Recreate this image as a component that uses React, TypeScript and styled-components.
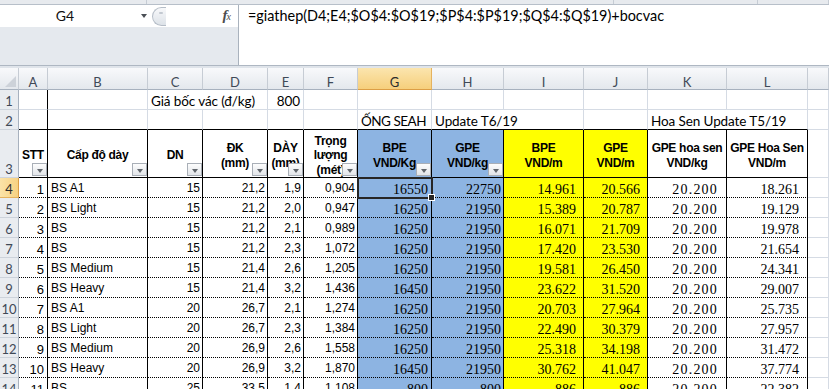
import React from 'react';
import styled, { createGlobalStyle } from 'styled-components';

const GlobalStyle = createGlobalStyle`
  html, body {
    margin: 0;
    padding: 0;
    background: #fff;
    overflow: hidden;
  }
  body {
    font-family: "Liberation Sans", Arial, sans-serif;
  }
`;

const GRID = '#d5dbe4';
const INK = '#000';
const BLUE = '#8db4e2';
const YELLOW = '#ffff00';
const UI_FONT = 'Lato, "Noto Sans", sans-serif';

// row header + columns A..L + a slice of M
const COLS = '19px 29px 100px 55px 65px 36px 54px 74px 72px 80px 64px 79px 81px 21px';

type Line = 'grid' | 'solid' | 'dotted';
type Align = 'left' | 'right' | 'center';

const line = (l: Line = 'grid') =>
  l === 'solid' ? `1px solid ${INK}` : l === 'dotted' ? `1px dotted ${INK}` : `1px solid ${GRID}`;

const Window = styled.div`
  width: 829px;
  height: 389px;
  overflow: hidden;
  background: #fff;
`;

const Ribbon = styled.div`
  display: flex;
  height: 5px;
  box-sizing: border-box;
  background: #e7eaee;
  border-bottom: 1px solid #b7bfc9;
`;

const RibbonGroup = styled.div<{ $w?: number }>`
  width: ${p => (p.$w ? `${p.$w}px` : 'auto')};
  flex: ${p => (p.$w ? 'none' : 1)};
  border-right: 1px solid #c6ccd4;
`;

const FormulaBar = styled.div`
  display: flex;
  height: 61px;
  box-sizing: border-box;
  border-bottom: 1px solid #aeb7c2;
`;

const LeftPane = styled.div`
  width: 239px;
  box-sizing: border-box;
  display: flex;
  flex-direction: column;
  background: #e5e9ee;
  border-right: 1px solid #a9b2bd;
`;

const NameRow = styled.div`
  height: 22px;
  display: flex;
  align-items: center;
  background: #fff;
`;

const NameBox = styled.div`
  width: 152px;
  height: 100%;
  display: flex;
  align-items: center;
`;

const NameText = styled.span`
  width: 130px;
  text-align: center;
  font: 14px/20px ${UI_FONT};
  color: #111;
`;

const Caret = styled.span`
  width: 0;
  height: 0;
  margin: 0 5px 0 auto;
  border-left: 3.5px solid transparent;
  border-right: 3.5px solid transparent;
  border-top: 4px solid #4a4f55;
`;

const Splitter = styled.div`
  position: relative;
  width: 14px;
  height: 19px;
  box-sizing: border-box;
  border: 1px solid #b5bdc7;
  border-right: none;
  border-radius: 10px 0 0 10px;
  background: linear-gradient(#f7f8fa, #dde2e8);
  &::after {
    content: '';
    position: absolute;
    left: 6px;
    top: 4px;
    width: 4px;
    height: 2px;
    border-radius: 1px;
    background: #c3c9d1;
  }
`;

const FxZone = styled.div`
  flex: 1;
  height: 100%;
  display: flex;
  align-items: center;
  justify-content: flex-end;
  padding-right: 7px;
`;

const Fx = styled.span`
  font: italic bold 15px/20px "Liberation Serif", "Times New Roman", serif;
  color: #4d4d4d;
`;

const FxSub = styled.span`
  font-size: 10px;
  font-weight: normal;
  margin-left: -1px;
`;

const FormulaText = styled.div`
  flex: 1;
  background: #fff;
  padding: 1px 0 0 9px;
  font: 14.4px/20px ${UI_FONT};
  color: #000;
  white-space: nowrap;
`;

const Gap = styled.div`
  height: 2px;
  background: #dfe4ea;
`;

const Sheet = styled.div`
  display: grid;
  grid-template-columns: ${COLS};
  grid-template-rows: 22px 20px 20px 48px repeat(11, 20px);
`;

const ColHead = styled.div<{ $active?: boolean }>`
  box-sizing: border-box;
  position: relative;
  display: flex;
  align-items: flex-end;
  justify-content: center;
  font: 13px/14px ${UI_FONT};
  color: ${p => (p.$active ? '#2c2c2c' : '#3f4957')};
  background: ${p =>
    p.$active ? 'linear-gradient(#fbe5ae, #f6cf7c)' : 'linear-gradient(#f8f9fb, #e4e8ed)'};
  border-right: 1px solid ${p => (p.$active ? '#e5b25e' : '#c6ccd4')};
  border-bottom: 1px solid ${p => (p.$active ? '#dc9e45' : '#a7b1be')};
`;

const Corner = styled(ColHead)`
  &::after {
    content: '';
    position: absolute;
    right: 2px;
    bottom: 2px;
    border-left: 11px solid transparent;
    border-bottom: 11px solid #cdd2d9;
  }
`;

const RowHead = styled.div<{ $active?: boolean }>`
  box-sizing: border-box;
  display: flex;
  align-items: flex-end;
  justify-content: center;
  padding-bottom: 1px;
  font: 13px/14px ${UI_FONT};
  color: ${p => (p.$active ? '#2c2c2c' : '#3f4957')};
  background: ${p => (p.$active ? 'linear-gradient(90deg, #fbe3a8, #f7d282)' : '#e9ecf0')};
  border-right: 1px solid ${p => (p.$active ? '#dc9e45' : '#a7b1be')};
  border-bottom: 1px solid ${p => (p.$active ? '#e5b25e' : '#cdd3db')};
`;

const Cell = styled.div<{ $r?: Line; $b?: Line; $fill?: string; $align?: Align; $span?: number }>`
  box-sizing: border-box;
  position: relative;
  display: flex;
  align-items: flex-end;
  justify-content: ${p =>
    p.$align === 'right' ? 'flex-end' : p.$align === 'center' ? 'center' : 'flex-start'};
  min-width: 0;
  overflow: hidden;
  white-space: nowrap;
  background: ${p => p.$fill || '#fff'};
  border-right: ${p => line(p.$r)};
  border-bottom: ${p => line(p.$b)};
  grid-column: ${p => (p.$span ? `span ${p.$span}` : 'auto')};
`;

const ActiveCell = styled(Cell)`
  overflow: visible;
  z-index: 2;
`;

const Selection = styled.span`
  position: absolute;
  top: -1px;
  left: -1px;
  right: -2px;
  bottom: -2px;
  border: 2px solid #262626;
  pointer-events: none;
  &::after {
    content: '';
    position: absolute;
    right: -4px;
    bottom: -4px;
    width: 5px;
    height: 5px;
    background: #262626;
    border: 1px solid #fff;
  }
`;

const HeadCell = styled(Cell)`
  align-items: center;
  justify-content: center;
  padding-top: 4px;
  white-space: normal;
`;

const HeadText = styled.div`
  font: bold 12px/14.5px "Liberation Sans", Arial, sans-serif;
  letter-spacing: -0.3px;
  text-align: center;
  color: #000;
`;

const FilterBtn = styled.span`
  position: absolute;
  right: 0;
  bottom: 1px;
  width: 15px;
  height: 13px;
  box-sizing: border-box;
  display: flex;
  align-items: center;
  justify-content: center;
  border: 1px solid #a9afb7;
  background: linear-gradient(#fdfdfd, #e2e5e9);
  &::after {
    content: '';
    margin-top: 2px;
    border-left: 3.5px solid transparent;
    border-right: 3.5px solid transparent;
    border-top: 4px solid #62676d;
  }
`;

const Label = styled.span<{ $tight?: boolean }>`
  padding: 0 3px;
  font: 13.5px/15px ${UI_FONT};
  letter-spacing: ${p => (p.$tight ? '-0.5px' : '-0.1px')};
  color: #000;
`;

const Idx = styled.span`
  padding-right: 3px;
  font: 13px/14px "Liberation Sans", Arial, sans-serif;
  color: #000;
`;

const Txt = styled.span<{ $right?: boolean }>`
  padding: 0 ${p => (p.$right ? 2 : 0)}px 2px ${p => (p.$right ? 0 : 3)}px;
  font: 12px/14px "Liberation Sans", Arial, sans-serif;
  color: #000;
`;

const Num = styled.span<{ $pr: number; $wide?: boolean }>`
  padding-right: ${p => p.$pr}px;
  font: 14px/14px "Liberation Serif", "Times New Roman", serif;
  letter-spacing: ${p => (p.$wide ? '1.2px' : '0')};
  color: #000;
`;

type Item = [number, string, number, string, string, string, number, number, string, string, string, string];

const ITEMS: Item[] = [
  [1, 'BS A1', 15, '21,2', '1,9', '0,904', 16550, 22750, '14.961', '20.566', '20.200', '18.261'],
  [2, 'BS Light', 15, '21,2', '2,0', '0,947', 16250, 21950, '15.389', '20.787', '20.200', '19.129'],
  [3, 'BS', 15, '21,2', '2,1', '0,989', 16250, 21950, '16.071', '21.709', '20.200', '19.978'],
  [4, 'BS', 15, '21,2', '2,3', '1,072', 16250, 21950, '17.420', '23.530', '20.200', '21.654'],
  [5, 'BS Medium', 15, '21,4', '2,6', '1,205', 16250, 21950, '19.581', '26.450', '20.200', '24.341'],
  [6, 'BS Heavy', 15, '21,4', '3,2', '1,436', 16450, 21950, '23.622', '31.520', '20.200', '29.007'],
  [7, 'BS A1', 20, '26,7', '2,1', '1,274', 16250, 21950, '20.703', '27.964', '20.200', '25.735'],
  [8, 'BS Light', 20, '26,7', '2,3', '1,384', 16250, 21950, '22.490', '30.379', '20.200', '27.957'],
  [9, 'BS Medium', 20, '26,9', '2,6', '1,558', 16250, 21950, '25.318', '34.198', '20.200', '31.472'],
  [10, 'BS Heavy', 20, '26,9', '3,2', '1,870', 16450, 21950, '30.762', '41.047', '20.200', '37.774'],
  [11, 'BS', 25, '33,5', '1,4', '1,108', 800, 800, '886', '886', '20.200', '22.382'],
];

const HEADINGS: { lines: string[]; fill?: string; filter?: boolean }[] = [
  { lines: ['STT'], filter: true },
  { lines: ['Cấp độ dày'], filter: true },
  { lines: ['DN'], filter: true },
  { lines: ['ĐK', '(mm)'], filter: true },
  { lines: ['DÀY', '(mm)'], filter: true },
  { lines: ['Trọng', 'lượng', '(mét)'], filter: true },
  { lines: ['BPE', 'VND/Kg'], fill: BLUE, filter: true },
  { lines: ['GPE', 'VND/kg'], fill: BLUE, filter: true },
  { lines: ['BPE', 'VND/m'], fill: YELLOW },
  { lines: ['GPE', 'VND/m'], fill: YELLOW },
  { lines: ['GPE hoa sen', 'VND/kg'] },
  { lines: ['GPE Hoa Sen', 'VND/m'] },
];

const LETTERS = ['A', 'B', 'C', 'D', 'E', 'F', 'G', 'H', 'I', 'J', 'K', 'L', ''];

const App: React.FC = () => {
  return (
    <Window>
      <GlobalStyle />
      <Ribbon>
        <RibbonGroup $w={146} />
        <RibbonGroup $w={466} />
        <RibbonGroup $w={143} />
        <RibbonGroup />
      </Ribbon>

      <FormulaBar>
        <LeftPane>
          <NameRow>
            <NameBox>
              <NameText>G4</NameText>
              <Caret />
            </NameBox>
            <Splitter />
            <FxZone>
              <Fx>
                f<FxSub>x</FxSub>
              </Fx>
            </FxZone>
          </NameRow>
        </LeftPane>
        <FormulaText>=giathep(D4;E4;$O$4:$O$19;$P$4:$P$19;$Q$4:$Q$19)+bocvac</FormulaText>
      </FormulaBar>
      <Gap />

      <Sheet>
        {/* column letters */}
        <Corner />
        {LETTERS.map((l, i) => (
          <ColHead key={`c${i}`} $active={l === 'G'}>
            {l}
          </ColHead>
        ))}

        {/* row 1 */}
        <RowHead>1</RowHead>
        <Cell $r="solid" />
        <Cell />
        <Cell $span={2}>
          <Label>Giá bốc vác (đ/kg)</Label>
        </Cell>
        <Cell $align="right">
          <Label>800</Label>
        </Cell>
        <Cell />
        <Cell />
        <Cell />
        <Cell />
        <Cell />
        <Cell />
        <Cell />
        <Cell />

        {/* row 2 */}
        <RowHead>2</RowHead>
        <Cell $r="solid" $b="solid" />
        <Cell $b="solid" />
        <Cell $b="solid" />
        <Cell $b="solid" />
        <Cell $b="solid" />
        <Cell $b="solid" />
        <Cell $b="solid">
          <Label $tight>ỐNG SEAH</Label>
        </Cell>
        <Cell $b="solid" $span={2}>
          <Label>Update T6/19</Label>
        </Cell>
        <Cell $b="solid" />
        <Cell $b="solid" $span={2}>
          <Label>Hoa Sen Update T5/19</Label>
        </Cell>
        <Cell />

        {/* row 3: table headings */}
        <RowHead>3</RowHead>
        {HEADINGS.map((h, i) => (
          <HeadCell key={`h${i}`} $r="solid" $b="solid" $fill={h.fill}>
            <HeadText>
              {h.lines.map((t, j) => (
                <div key={j}>{t}</div>
              ))}
            </HeadText>
            {h.filter && <FilterBtn />}
          </HeadCell>
        ))}
        <Cell />

        {/* rows 4..14 */}
        {ITEMS.map((it, i) => {
          const row = i + 4;
          const G = i === 0 ? ActiveCell : Cell;
          return (
            <React.Fragment key={row}>
              <RowHead $active={row === 4}>{row}</RowHead>
              <Cell $r="solid" $b="dotted" $align="right">
                <Idx>{it[0]}</Idx>
              </Cell>
              <Cell $r="solid" $b="dotted">
                <Txt>{it[1]}</Txt>
              </Cell>
              <Cell $r="solid" $b="dotted" $align="right">
                <Txt $right>{it[2]}</Txt>
              </Cell>
              <Cell $r="solid" $b="dotted" $align="right">
                <Txt $right>{it[3]}</Txt>
              </Cell>
              <Cell $r="solid" $b="dotted" $align="right">
                <Txt $right>{it[4]}</Txt>
              </Cell>
              <Cell $r="solid" $b="dotted" $align="right">
                <Txt $right>{it[5]}</Txt>
              </Cell>
              <G $r="solid" $b="dotted" $align="right" $fill={BLUE}>
                <Num $pr={3}>{it[6]}</Num>
                {i === 0 && <Selection />}
              </G>
              <Cell $r="solid" $b="dotted" $align="right" $fill={BLUE}>
                <Num $pr={2}>{it[7]}</Num>
              </Cell>
              <Cell $r="solid" $b="dotted" $align="right" $fill={YELLOW}>
                <Num $pr={7}>{it[8]}</Num>
              </Cell>
              <Cell $r="solid" $b="dotted" $align="right" $fill={YELLOW}>
                <Num $pr={7}>{it[9]}</Num>
              </Cell>
              <Cell $r="solid" $b="dotted" $align="right">
                <Num $pr={8} $wide>
                  {it[10]}
                </Num>
              </Cell>
              <Cell $r="solid" $b="dotted" $align="right">
                <Num $pr={8}>{it[11]}</Num>
              </Cell>
              <Cell />
            </React.Fragment>
          );
        })}
      </Sheet>
    </Window>
  );
};

export default App;
